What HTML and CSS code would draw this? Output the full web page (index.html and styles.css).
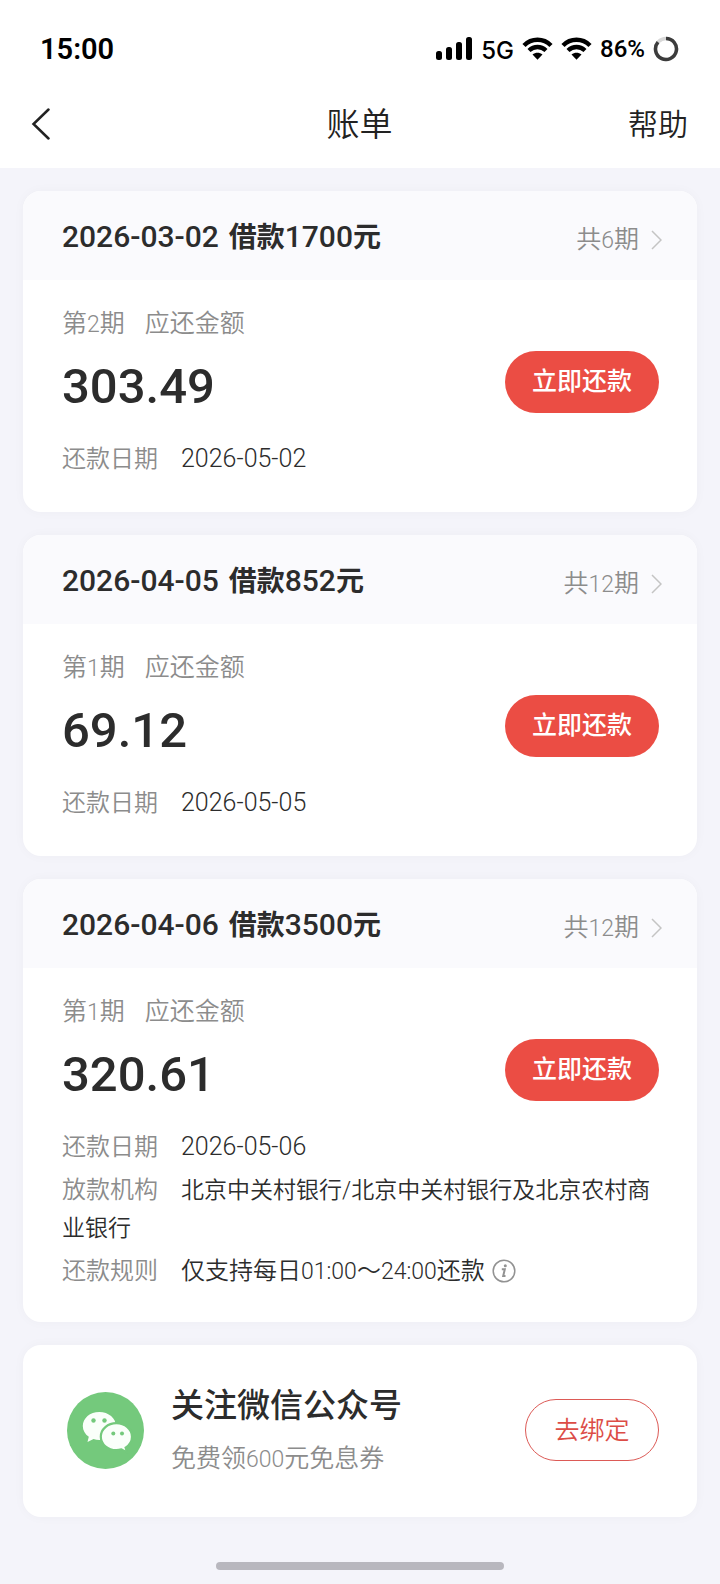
FILE: index.html
```html
<!DOCTYPE html>
<html lang="zh-CN">
<head>
<meta charset="utf-8">
<meta name="viewport" content="width=device-width, initial-scale=1">
<title>账单</title>
<link rel="stylesheet" href="styles.css">
</head>
<body>
<svg class="defs" aria-hidden="true">
  <symbol id="wifi" viewBox="0 0 31 23">
    <path d="M2 8.500C9.500 .8 21.500 .8 29 8.500M7 13.500c5-4.600 12-4.600 17 0" fill="none" stroke="currentColor" stroke-width="4.400"/>
    <path d="M15.500 22.800l-5-5.200c3-2.400 7-2.400 10 0z" fill="currentColor"/>
  </symbol>
  <symbol id="chevron" viewBox="0 0 11 20">
    <path d="M1 1l9 9-9 9" fill="none" stroke="currentColor" stroke-width="1.500"/>
  </symbol>
</svg>
<div class="page">
  <header class="top">
    <div class="status">
      <span class="time">15:00</span>
      <div class="status-icons">
        <svg class="signal" viewBox="0 0 37 23" aria-hidden="true">
          <rect x="0" y="14" width="6" height="9" rx="2.500"/><rect x="10" y="10" width="6" height="13" rx="2.500"/><rect x="20" y="5" width="6" height="18" rx="2.500"/><rect x="30" y="0" width="6" height="23" rx="2.500"/>
        </svg>
        <span class="network">5G</span>
        <svg class="wifi" aria-hidden="true"><use href="#wifi"/></svg>
        <svg class="wifi" aria-hidden="true"><use href="#wifi"/></svg>
        <span class="battery">86%</span>
        <svg class="ring" viewBox="0 0 26 26" fill="none" stroke-width="3.500" aria-hidden="true">
          <circle cx="13" cy="13" r="10.500" stroke="#d8d8d8"/>
          <path d="M13 2.500a10.500 10.500 0 1 1-8 3.700" stroke="#3c3c3c"/>
        </svg>
      </div>
    </div>
    <nav class="nav">
      <button class="back" type="button" aria-label="返回">
        <svg viewBox="0 0 20 32" aria-hidden="true"><path d="M17.500 1.500L2.500 16l15 14.500" fill="none" stroke="currentColor" stroke-width="2.500" stroke-linecap="round"/></svg>
      </button>
      <h1 class="nav-title">账单</h1>
      <a class="help" href="#">帮助</a>
    </nav>
  </header>

  <main class="list">
    <section class="card">
      <div class="card-head">
        <h2 class="loan"><span class="num loan-date">2026-03-02</span> 借款<span class="num">1700</span>元</h2>
        <a class="terms" href="#"><span>共<span class="digit">6</span>期</span><svg class="chevron" aria-hidden="true"><use href="#chevron"/></svg></a>
      </div>
      <div class="card-body">
        <div class="due">
          <div>
            <p class="caption"><span>第<span class="digit">2</span>期</span><span>应还金额</span></p>
            <p class="amount">303.49</p>
          </div>
          <button class="pay" type="button">立即还款</button>
        </div>
        <div class="details">
          <p class="row"><span class="label">还款日期</span><span class="date">2026-05-02</span></p>
        </div>
      </div>
    </section>

    <section class="card">
      <div class="card-head">
        <h2 class="loan"><span class="num loan-date">2026-04-05</span> 借款<span class="num">852</span>元</h2>
        <a class="terms" href="#"><span>共<span class="digit">12</span>期</span><svg class="chevron" aria-hidden="true"><use href="#chevron"/></svg></a>
      </div>
      <div class="card-body">
        <div class="due">
          <div>
            <p class="caption"><span>第<span class="digit">1</span>期</span><span>应还金额</span></p>
            <p class="amount">69.12</p>
          </div>
          <button class="pay" type="button">立即还款</button>
        </div>
        <div class="details">
          <p class="row"><span class="label">还款日期</span><span class="date">2026-05-05</span></p>
        </div>
      </div>
    </section>

    <section class="card">
      <div class="card-head">
        <h2 class="loan"><span class="num loan-date">2026-04-06</span> 借款<span class="num">3500</span>元</h2>
        <a class="terms" href="#"><span>共<span class="digit">12</span>期</span><svg class="chevron" aria-hidden="true"><use href="#chevron"/></svg></a>
      </div>
      <div class="card-body card-body-long">
        <div class="due">
          <div>
            <p class="caption"><span>第<span class="digit">1</span>期</span><span>应还金额</span></p>
            <p class="amount">320.61</p>
          </div>
          <button class="pay" type="button">立即还款</button>
        </div>
        <div class="details">
          <p class="row"><span class="label">还款日期</span><span class="date">2026-05-06</span></p>
          <p class="row"><span class="label">放款机构</span><span class="lender">北京中关村银行/北京中关村银行及北京农村商业银行</span></p>
          <p class="row"><span class="label">还款规则</span>仅支持每日<span class="digit">01:00</span>～<span class="digit">24:00</span>还款<button class="info" type="button" aria-label="还款规则说明"><svg viewBox="0 0 24 24" aria-hidden="true"><circle cx="12" cy="12" r="10.800" fill="none" stroke="currentColor" stroke-width="1.500"/><circle cx="13.300" cy="6.800" r="1.500" fill="currentColor"/><path d="M9.800 10.300h3L11.200 17h2.300" fill="none" stroke="currentColor" stroke-width="2"/></svg></button></p>
        </div>
      </div>
    </section>

    <section class="card promo">
      <svg class="wechat" viewBox="0 0 77 77" aria-hidden="true">
        <circle cx="38.500" cy="38.500" r="38.500" fill="#74c97c"/>
        <g fill="#fafffa">
          <path d="M32.300 20C23 20 15.800 26.200 15.800 34c0 4.500 2.300 8.200 6 10.800L20.500 50l6-3c1.800.6 3.800.9 5.800.9 9.300 0 16.700-6.200 16.700-13.900S41.600 20 32.300 20z"/>
          <path stroke="#74c97c" stroke-width="2.200" d="M49.400 31.200c-8.600 0-15.600 6-15.600 13.500s7 13.500 15.600 13.500c1.800 0 3.500-.3 5.100-.8l5.600 3-1.500-4.800c4-2.500 6.400-6.400 6.400-10.900 0-7.500-7-13.500-15.600-13.500z"/>
        </g>
        <g fill="#74c97c"><circle cx="26.500" cy="28.500" r="2.200"/><circle cx="37.500" cy="28.500" r="2.200"/><circle cx="46.300" cy="41.600" r="2"/><circle cx="55" cy="41.600" r="2"/></g>
      </svg>
      <div class="promo-text">
        <h2 class="promo-title">关注微信公众号</h2>
        <p class="promo-sub">免费领<span class="digit">600</span>元免息券</p>
      </div>
      <button class="bind" type="button">去绑定</button>
    </section>
  </main>
  <div class="home"></div>
</div>
</body>
</html>
```
FILE: styles.css
```css
* { box-sizing: border-box; }
body {
  margin: 0;
  background: #f4f4fa;
  color: #2c2c2c;
  font-family: Roboto, "Noto Sans CJK SC", sans-serif;
}
h1, h2, p { margin: 0; }
a { color: inherit; text-decoration: none; }
button { border: 0; padding: 0; background: none; color: inherit; font: inherit; cursor: pointer; }
svg { display: block; flex: none; }
.defs { display: none; }
.page { display: flex; flex-direction: column; min-height: 100vh; }

.top { background: #fff; }
.status {
  display: flex;
  align-items: center;
  justify-content: space-between;
  height: 80px;
  padding: 17px 41px 0 40px;
  color: #000;
}
.time { font-size: 29px; font-weight: 600; }
.status-icons { display: flex; align-items: center; gap: 8px; }
.signal { width: 37px; height: 23px; }
.network { padding-top: 3px; font: 500 24px Inter, sans-serif; }
.wifi { width: 31px; height: 23px; }
.battery { font-size: 24px; font-weight: 500; }
.ring { width: 26px; height: 26px; }

.nav {
  display: grid;
  grid-template-columns: 1fr auto 1fr;
  align-items: center;
  height: 88px;
  padding: 0 32px 0 31px;
  color: #222;
}
.back { width: 20px; height: 32px; }
.back svg { width: 20px; height: 32px; }
.nav-title { padding-top: 2px; font-size: 33px; font-weight: 350; line-height: 48px; }
.help { justify-self: end; padding-top: 2px; font-size: 30px; font-weight: 350; line-height: 48px; }

.list { display: flex; flex-direction: column; gap: 23px; padding: 23px; }
.card {
  overflow: hidden;
  border-radius: 18px;
  background: #fff;
  box-shadow: 0 0 12px rgba(40, 40, 60, 0.03);
}
.card-head {
  display: flex;
  align-items: center;
  justify-content: space-between;
  height: 89px;
  padding: 5px 35px 0 39px;
  background: #fafafd;
}
.loan { font-size: 28px; font-weight: 700; line-height: 40px; }
.num { font-size: 30px; font-weight: 500; line-height: 1; }
.loan-date { margin-right: 3px; }
.terms { display: flex; align-items: center; gap: 12px; padding-top: 3px; font-size: 25px; font-weight: 350; line-height: 34px; color: #8c8c8c; }
.digit { font-size: 23px; line-height: 1; }
.chevron { width: 11px; height: 20px; color: #c4c4c4; }

.card-body { padding: 27px 38px 34px 39px; }
.card-body-long { padding-bottom: 32px; }
.due { display: flex; align-items: flex-end; justify-content: space-between; }
.caption { display: flex; gap: 20px; font-size: 25px; font-weight: 350; line-height: 34px; color: #8c8c8c; }
.amount { margin-top: 18px; font-size: 49px; font-weight: 500; line-height: 56px; }
.pay {
  width: 154px;
  height: 62px;
  margin-bottom: 2px;
  padding-bottom: 6px;
  border-radius: 31px;
  background: #eb4d44;
  color: #fff;
  font-size: 25px;
  font-weight: 500;
}
.details { display: flex; flex-direction: column; gap: 5px; margin-top: 25px; }
.row { font-size: 24px; font-weight: 350; line-height: 38px; }
.label { margin-right: 23px; color: #8c8c8c; }
.date { font-size: 25px; line-height: 1; }
.lender { font-size: 23px; line-height: 1; }
.info { width: 24px; height: 24px; margin-left: 7px; color: #929292; vertical-align: -4px; }
.info svg { width: 24px; height: 24px; }

.promo { display: flex; align-items: center; padding: 39px 38px 41px 44px; }
.wechat { width: 77px; height: 77px; }
.promo-text { flex: 1; margin-left: 27px; }
.promo-title { font-size: 33px; font-weight: 500; line-height: 44px; }
.promo-sub { margin-top: 14px; font-size: 25px; font-weight: 350; line-height: 34px; color: #8c8c8c; }
.bind {
  width: 134px;
  height: 62px;
  padding-bottom: 4px;
  border: 1px solid #dc5a56;
  border-radius: 31px;
  color: #dc4c46;
  font-size: 25px;
  font-weight: 350;
}
.home {
  width: 40%;
  height: 8px;
  margin: auto auto 14px;
  border-radius: 4px;
  background: #b8b7be;
}
```
